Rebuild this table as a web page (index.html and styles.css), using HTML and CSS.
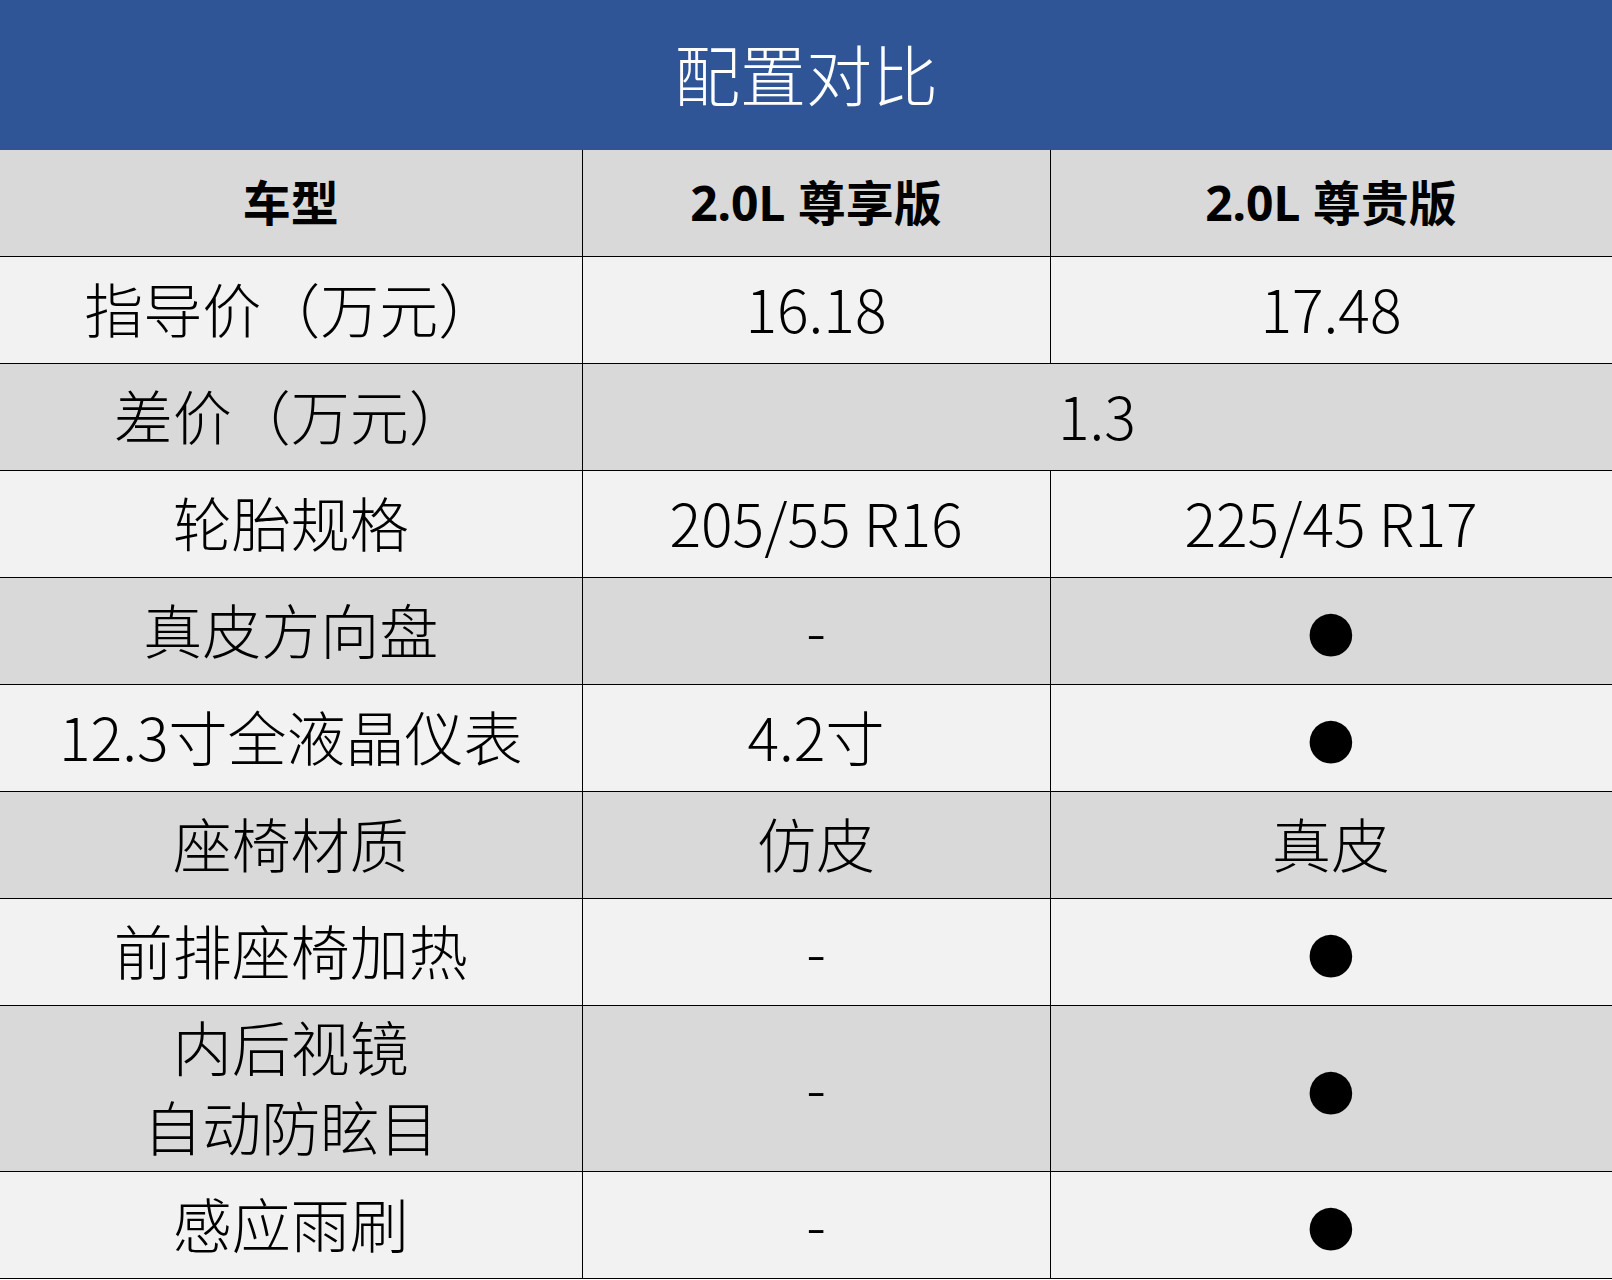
FILE: index.html
```html
<!DOCTYPE html>
<html lang="zh-CN">
<head>
<meta charset="utf-8">
<title>配置对比</title>
<link rel="stylesheet" href="styles.css">
</head>
<body>
<div class="page">
  <header class="banner"><h1 class="banner-title">配置对比</h1></header>
  <table class="spec">
    <colgroup>
      <col class="c1"><col class="c2"><col class="c3">
    </colgroup>
    <thead>
      <tr class="dark head">
        <th>车型</th><th>2.0L 尊享版</th><th>2.0L 尊贵版</th>
      </tr>
    </thead>
    <tbody>
      <tr class="light"><td>指导价（万元）</td><td>16.18</td><td>17.48</td></tr>
      <tr class="dark"><td>差价（万元）</td><td colspan="2">1.3</td></tr>
      <tr class="light"><td>轮胎规格</td><td>205/55 R16</td><td>225/45 R17</td></tr>
      <tr class="dark"><td>真皮方向盘</td><td>-</td><td><span class="dot">●</span></td></tr>
      <tr class="light"><td>12.3寸全液晶仪表</td><td>4.2寸</td><td><span class="dot">●</span></td></tr>
      <tr class="dark"><td>座椅材质</td><td>仿皮</td><td>真皮</td></tr>
      <tr class="light"><td>前排座椅加热</td><td>-</td><td><span class="dot">●</span></td></tr>
      <tr class="dark tall"><td>内后视镜<br>自动防眩目</td><td>-</td><td><span class="dot">●</span></td></tr>
      <tr class="light"><td>感应雨刷</td><td>-</td><td><span class="dot">●</span></td></tr>
    </tbody>
  </table>
</div>
</body>
</html>
```

FILE: styles.css
```css
html, body {
  margin: 0;
  padding: 0;
  background: #ffffff;
}
.page {
  width: 1612px;
  font-family: "Noto Sans CJK SC", "Noto Sans", sans-serif;
  color: #000;
}
.banner {
  height: 150px;
  background: #2f5597;
  display: flex;
  align-items: center;
  justify-content: center;
}
.banner-title {
  margin: 0;
  color: #fff;
  font-family: "Noto Sans CJK SC", sans-serif;
  font-weight: 300;
  font-size: 66px;
  line-height: 1;
  padding-bottom: 6px;
}
.spec {
  width: 1612px;
  border-collapse: collapse;
  table-layout: fixed;
}
.c1 { width: 582px; }
.c2 { width: 468px; }
.c3 { width: 562px; }
.spec th, .spec td {
  border: 1px solid #000;
  height: 106px;
  padding: 0;
  text-align: center;
  vertical-align: middle;
  font-size: 59px;
  font-weight: 300;
  line-height: 80px;
}
.spec td {
  height: 101px;
  padding-bottom: 5px;
}
.spec tr > :first-child { border-left: none; }
.spec tr:first-child > * { border-top: none; }
.spec th {
  font-family: "Noto Sans", "Noto Sans CJK SC", sans-serif;
  font-size: 48px;
  font-weight: 700;
}
.spec .tall td { height: 160px; }
.dark { background: #d9d9d9; }
.light { background: #f2f2f2; }
.dot {
  font-family: "DejaVu Sans", sans-serif;
  font-size: 99px;
  line-height: 1;
}
```
